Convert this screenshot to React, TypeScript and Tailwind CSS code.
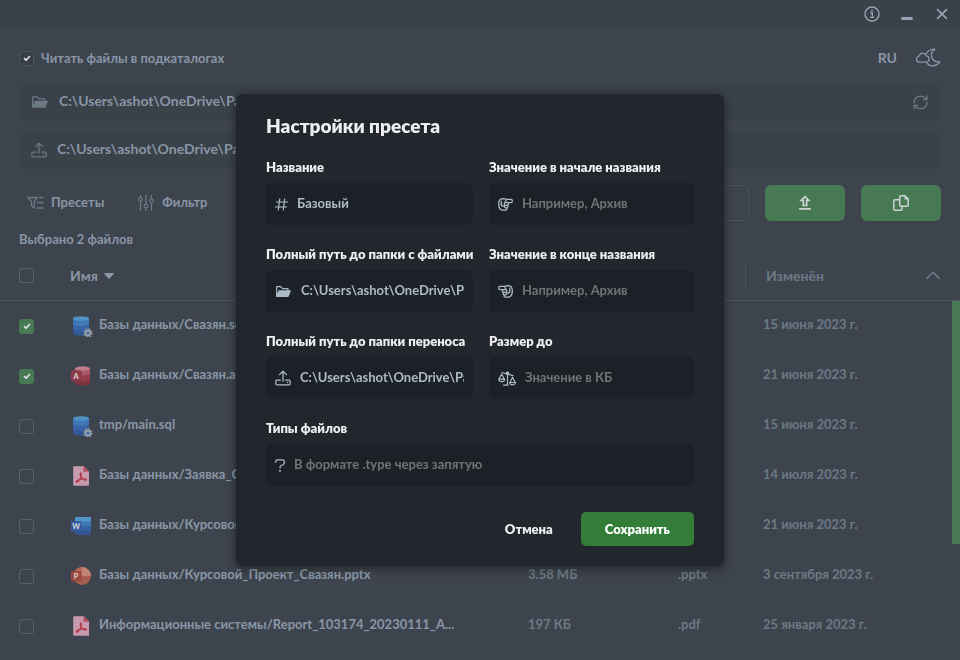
import { useState, type ReactNode } from "react";
import { AiFillFolderOpen } from "react-icons/ai";
import { CgClose } from "react-icons/cg";
import { MdOutlineUpload } from "react-icons/md";
import { VscChevronUp } from "react-icons/vsc";
import { RefreshCw } from "lucide-react";

const PATH = "C:\\Users\\ashot\\OneDrive\\Рабочий стол";

type Kind = "sql" | "access" | "pdf" | "word" | "ppt";

type FileRow = {
  kind: Kind;
  name: string;
  size: string;
  ext: string;
  date: string;
  selected: boolean;
};

const FILES: FileRow[] = [
  { kind: "sql", name: "Базы данных/Свазян.sql", size: "12 КБ", ext: ".sql", date: "15 июня 2023 г.", selected: true },
  { kind: "access", name: "Базы данных/Свазян.accdb", size: "1.2 МБ", ext: ".mdb", date: "21 июня 2023 г.", selected: true },
  { kind: "sql", name: "tmp/main.sql", size: "12 КБ", ext: ".sql", date: "15 июня 2023 г.", selected: false },
  { kind: "pdf", name: "Базы данных/Заявка_Свазян.pdf", size: "90 КБ", ext: ".pdf", date: "14 июля 2023 г.", selected: false },
  { kind: "word", name: "Базы данных/Курсовой_Проект.docx", size: "2 МБ", ext: ".docx", date: "21 июня 2023 г.", selected: false },
  { kind: "ppt", name: "Базы данных/Курсовой_Проект_Свазян.pptx", size: "3.58 МБ", ext: ".pptx", date: "3 сентября 2023 г.", selected: false },
  { kind: "pdf", name: "Информационные системы/Report_103174_20230111_A...", size: "197 КБ", ext: ".pdf", date: "25 января 2023 г.", selected: false },
];

function Check({ label, initial, green = false }: { label: string; initial: boolean; green?: boolean }) {
  const [on, setOn] = useState(initial);
  return (
    <span className="grid size-[15px] shrink-0 place-items-center">
      <input
        type="checkbox"
        aria-label={label}
        checked={on}
        onChange={(e) => setOn(e.target.checked)}
        className={
          "col-start-1 row-start-1 size-[15px] appearance-none rounded-[3px] border " +
          (green && on ? "border-[#477a53] bg-[#477a53]" : on ? "border-[#4b535d] bg-[#373d47]" : "border-[#58606b] bg-transparent")
        }
      />
      {on && (
        <svg viewBox="0 0 8 8" className="pointer-events-none col-start-1 row-start-1 size-2" fill="none" stroke="#d5d8dc" strokeWidth="1.8">
          <path d="M1 4.2 3.1 6.2 7 2" />
        </svg>
      )}
    </span>
  );
}

function InfoIcon() {
  return (
    <svg viewBox="0 0 16 16" className="size-4" fill="none" stroke="currentColor">
      <circle cx="8" cy="8" r="7" strokeWidth="1.4" />
      <path d="M6.2 7h2.1v4.3M6 11.4h4.2" strokeWidth="1.4" />
      <circle cx="8" cy="4.7" r="1" fill="currentColor" stroke="none" />
    </svg>
  );
}

function CloudMoonIcon() {
  return (
    <svg viewBox="0 0 26 20" className="h-5 w-[26px]" fill="none" stroke="currentColor" strokeWidth="1.3" strokeLinejoin="round" strokeLinecap="round">
      <path d="M4.200 14.200a3 3 0 0 1-.4-5.900 4 4 0 0 1 7.600-.4 3.200 3.200 0 0 1 .5 6.200l-.8.100z" />
      <path d="M11.200 5.600C12.800 2.900 15.800 1.200 20 1.200c-3 2-4.200 5.100-3.300 8.100 1 3.300 4.300 4.900 8.300 4.400-1.600 2.500-4.200 4.100-7.500 4.100-2.200 0-4-.8-5.300-2.300" />
    </svg>
  );
}

function PresetsIcon() {
  return (
    <svg viewBox="0 0 17 14" className="h-3.5 w-[17px]" fill="none" stroke="currentColor" strokeWidth="1.3">
      <path d="M1 1.500h9.500L7.200 6v6L4.600 10V6z" />
      <path d="M12.500 1.500h4M10 6.500h6.500M10 12h6.500" />
    </svg>
  );
}

function SlidersIcon() {
  return (
    <svg viewBox="0 0 16 16" className="size-4" fill="none" stroke="currentColor" strokeWidth="1.2">
      <path d="M2.500 0v2.500M2.500 6.500V16M8 0v9M8 13v3M13.500 0v4M13.500 8v8" />
      <circle cx="2.500" cy="4.500" r="1.800" />
      <circle cx="8" cy="11" r="1.800" />
      <circle cx="13.500" cy="6" r="1.800" />
    </svg>
  );
}

function CopyIcon() {
  return (
    <svg viewBox="0 0 16 16" className="size-4" fill="none" stroke="currentColor" strokeWidth="1.500" strokeLinejoin="round">
      <path d="M8 .8h4L15.200 4v6a1.300 1.300 0 0 1-1.300 1.300H8A1.300 1.300 0 0 1 6.700 10V2.100A1.300 1.300 0 0 1 8 .8z" />
      <path d="M11.800.8v3.400h3.400z" fill="currentColor" strokeWidth="0.500" />
      <path d="M6.700 4.700H2.100A1.300 1.300 0 0 0 .8 6v7.900a1.300 1.300 0 0 0 1.300 1.300h5.700A1.300 1.300 0 0 0 9.100 13.900v-2.600" />
    </svg>
  );
}

function HashIcon() {
  return (
    <svg viewBox="0 0 13 13" className="size-[13px] shrink-0" fill="none" stroke="currentColor" strokeWidth="1.2">
      <path d="M4.800.5 3.200 12.500M9.800.5 8.200 12.500M1 4h12M0 9h12" />
    </svg>
  );
}

function UploadIcon() {
  return (
    <svg viewBox="0 0 16 16" className="size-4 shrink-0" fill="none" stroke="currentColor" strokeWidth="1.3" strokeLinejoin="round" strokeLinecap="round">
      <path d="M8 11V1.200M4.500 4.600 8 1.200l3.500 3.400" />
      <path d="M5.300 10.200H2a1.200 1.200 0 0 0-1.200 1.200v2.200A1.200 1.200 0 0 0 2 14.800h12a1.200 1.200 0 0 0 1.200-1.200v-2.200a1.200 1.200 0 0 0-1.200-1.200h-3.300" />
      <circle cx="12.600" cy="12.500" r=".8" fill="currentColor" stroke="none" />
    </svg>
  );
}

function ScalesIcon() {
  return (
    <svg viewBox="0 0 18 15" className="h-[15px] w-[18px] shrink-0" fill="none" stroke="currentColor" strokeWidth="1.200" strokeLinejoin="round" strokeLinecap="round">
      <path d="M4 1.500 15 4.600M9.500 1v13M5.500 14.200h4.500" />
      <circle cx="9.500" cy="2.300" r="1.300" />
      <path d="M3.600 3 1 8.200h5.400zM.7 8.200c.2 1.600 1.500 2.400 3 2.400s2.800-.8 3-2.400" />
      <path d="M14.500 6.300 12 11.500h5.200zM11.600 11.500c.2 1.600 1.500 2.400 3 2.400s2.700-.8 2.900-2.400" />
    </svg>
  );
}

function HandIcon({ flipped = false }: { flipped?: boolean }) {
  return (
    <svg viewBox="0 0 15 13" className={"h-[13px] w-[15px] shrink-0 " + (flipped ? "-scale-x-100" : "")} fill="none" stroke="currentColor" strokeWidth="1.3" strokeLinejoin="round" strokeLinecap="round">
      <path d="M13 1.400H8.500C7.500.9 6 .7 4.500.7 2 .8.7 3 .7 6s1.400 6 4 6.200h3c1.200 0 1.600-1.400 1-2.300 1.200-.2 1.500-1.600.9-2.500 1-.3 1.200-1.500.6-2.800H13c1.800-.1 1.800-3.100 0-3.200z" />
      <path d="M10.300 4.600H6.800L8 2.600M6.800 4.600c-1.200 1.200-.2 2.700.6 2.700h2.200M6.800 7.300c-.9 1 0 2.500.8 2.500h1.200M3.300 3.200v3.300c0 1 .8 1.700 2.200 1.700" />
    </svg>
  );
}

function QuestionIcon() {
  return (
    <svg viewBox="0 0 10 13" className="h-[13px] w-2.5 shrink-0" fill="none" stroke="currentColor" strokeWidth="1.3">
      <path d="M.7 3.800V2.500C.7 1.400 1.400.8 2.400.8h5.200c1 0 1.700.6 1.700 1.700v1.300c0 .8-.3 1.300-1 1.700L5.900 6.700c-.6.400-.9.800-.9 1.500v1.300" />
      <path d="M5 11v1.800" strokeWidth="1.700" />
    </svg>
  );
}

function FileIcon({ kind }: { kind: Kind }) {
  const box = "size-[22px] shrink-0";
  if (kind === "sql") {
    return (
      <svg viewBox="0 0 22 22" className={box}>
        <path d="M2 3v15c0 1.500 3.500 2.700 8 2.700s8-1.200 8-2.700V3z" fill="#345795" />
        <path d="M2 3v11.500c2 1.200 5 1.600 8 1.600s6-.4 8-1.600V3z" fill="#3863a6" />
        <path d="M2 3v6.500c2 1.200 5 1.600 8 1.600s6-.4 8-1.600V3z" fill="#4078b5" />
        <ellipse cx="10" cy="3.500" rx="8" ry="2.300" fill="#4f93c4" />
        <circle cx="17" cy="18" r="3.900" fill="none" stroke="#87909b" strokeWidth="1.800" strokeDasharray="1.700 1.360" />
        <circle cx="17" cy="18" r="2.500" fill="#3a6ea8" stroke="#98a1ab" strokeWidth="1.800" />
      </svg>
    );
  }
  if (kind === "access") {
    return (
      <svg viewBox="0 0 22 22" className={box}>
        <path d="M4 3v15.300c0 1.400 3.400 2.400 7.500 2.400s7.500-1 7.500-2.400V3z" fill="#7d3340" />
        <path d="M4 3v12c2 1 4.500 1.400 7.500 1.400S17 16 19 15V3z" fill="#953f4e" />
        <path d="M4 3v6c2 1 4.500 1.400 7.500 1.400S17 10 19 9V3z" fill="#a85766" />
        <ellipse cx="11.500" cy="3.500" rx="7.500" ry="2.200" fill="#bd7c8b" />
        <rect x="0" y="5.500" width="10.500" height="10.500" rx="1" fill="#8d3a49" />
        <text x="5.200" y="13.500" textAnchor="middle" fontSize="7.500" fontWeight="700" fill="#dcd3d8">A</text>
      </svg>
    );
  }
  if (kind === "word") {
    return (
      <svg viewBox="0 0 22 22" className={box}>
        <rect x="4" y="2" width="16" height="18" rx="1" fill="#335591" />
        <path d="M4 3a1 1 0 0 1 1-1h14a1 1 0 0 1 1 1v12.500H4z" fill="#3863a3" />
        <path d="M4 3a1 1 0 0 1 1-1h14a1 1 0 0 1 1 1v8H4z" fill="#4078b4" />
        <path d="M4 3a1 1 0 0 1 1-1h14a1 1 0 0 1 1 1v3.500H4z" fill="#5095c6" />
        <rect x="0" y="6" width="10.500" height="10.500" rx="1" fill="#375c9d" />
        <text x="5.200" y="14" textAnchor="middle" fontSize="7.500" fontWeight="700" fill="#d3dae3">W</text>
      </svg>
    );
  }
  if (kind === "ppt") {
    return (
      <svg viewBox="0 0 22 22" className={box}>
        <circle cx="11" cy="11" r="9" fill="#a65d4d" />
        <path d="M11 2a9 9 0 0 1 9 9h-9z" fill="#c38373" />
        <path d="M11 2a9 9 0 0 0-9 9h9z" fill="#b3685a" />
        <rect x="0" y="6" width="10.500" height="10.500" rx="1" fill="#98493d" />
        <text x="5.200" y="14" textAnchor="middle" fontSize="7.500" fontWeight="700" fill="#e0d4d3">P</text>
      </svg>
    );
  }
  return (
    <svg viewBox="0 0 22 22" className={box}>
      <path d="M3 1.200h9.800L18 6.500v14.300H3a.8.800 0 0 1-.8-.8V2a.8.800 0 0 1 .8-.8z" fill="#c79aae" />
      <path d="M12.500 1.200 18 6.800h-5.500z" fill="#b64b5b" />
      <path d="M9.600 8c1.200 0 .9 2.200.3 3.900-.7 2-2 4.600-3.800 5.300-1.300.3-1-1.200.8-2 2.500-1.100 5.500-1.600 7.500-1.200 1.600.4.900 1.400-.4 1.100-2-.6-4.600-3.400-4.700-5.500 0-.9 0-1.600.3-1.600z" fill="none" stroke="#b33c50" strokeWidth="1.300" />
    </svg>
  );
}

function Field({ id, label, icon, value, placeholder }: { id: string; label: string; icon: ReactNode; value?: string; placeholder?: string }) {
  return (
    <div className="flex min-w-0 flex-col gap-1.5">
      <label htmlFor={id} className="text-[13px] leading-5 font-extrabold whitespace-nowrap text-[#eeeeee]">
        {label}
      </label>
      <div className="flex h-[42px] items-center gap-[9px] rounded-md bg-[#1c2128] px-[9px] text-[#adbac7]">
        {icon}
        <input
          id={id}
          type="text"
          defaultValue={value}
          placeholder={placeholder}
          className="min-w-0 flex-1 bg-transparent pb-0.5 text-[13px] leading-5 font-bold outline-none placeholder:text-[#717375]"
        />
      </div>
    </div>
  );
}

function PathBar({ icon, label, children }: { icon: ReactNode; label: string; children?: ReactNode }) {
  return (
    <div className="flex h-[38px] items-center gap-2.5 rounded-md bg-[#3a4149] px-3 text-[#6b7985]">
      {icon}
      <input type="text" aria-label={label} defaultValue={PATH} className="min-w-0 flex-1 bg-transparent pb-0.5 text-sm leading-5 font-bold text-[#8996a7] outline-none" />
      {children}
    </div>
  );
}

export default function App() {
  return (
    <div className="flex h-screen flex-col overflow-hidden bg-[#3e444d] font-['Lato','Noto_Sans',sans-serif] text-[13px] leading-5 font-bold text-[#8996a7]">
      <header className="flex h-7 shrink-0 items-center justify-end gap-5 bg-[#3b4149] pr-2.5 text-[#97a4b5]">
        <button type="button" aria-label="О программе">
          <InfoIcon />
        </button>
        <button type="button" aria-label="Свернуть" className="flex h-3 w-3.5 items-end justify-center">
          <span className="h-[3px] w-3 rounded-full bg-current" />
        </button>
        <button type="button" aria-label="Закрыть">
          <CgClose className="size-4" strokeWidth={0.8} stroke="currentColor" />
        </button>
      </header>

      <main className="flex min-h-0 flex-1 flex-col pt-5">
        <div className="flex flex-col px-[19px]">
          <div className="flex h-5 items-center">
            <label className="flex items-center gap-[7px]">
              <Check label="Читать файлы в подкаталогах" initial />
              Читать файлы в подкаталогах
            </label>
            <button type="button" className="mr-[18px] ml-auto text-sm">
              RU
            </button>
            <button type="button" aria-label="Тема">
              <CloudMoonIcon />
            </button>
          </div>

          <div className="mt-[15px] flex flex-col gap-2.5">
            <PathBar label="Папка с файлами" icon={<AiFillFolderOpen className="size-[18px] shrink-0" />}>
              <button type="button" aria-label="Обновить">
                <RefreshCw className="size-[17px]" strokeWidth={1.8} />
              </button>
            </PathBar>
            <PathBar label="Папка переноса" icon={<UploadIcon />} />
          </div>

          <div className="mt-4 flex h-9 items-center">
            <button type="button" className="flex items-center gap-[7px] pl-2">
              <span className="text-[#6b7985]">
                <PresetsIcon />
              </span>
              <span className="pb-0.5">Пресеты</span>
            </button>
            <button type="button" className="ml-[34px] flex items-center gap-2">
              <span className="text-[#6b7985]">
                <SlidersIcon />
              </span>
              <span className="pb-0.5">Фильтр</span>
            </button>
            <input type="search" aria-label="Поиск" className="ml-10 h-9 min-w-0 flex-1 rounded-md border border-[#4b525b] bg-transparent px-3 outline-none" />
            <button type="button" aria-label="Перенести" className="ml-4 grid h-9 w-20 place-items-center rounded-md bg-[#477a53] text-[#d0d3d6]">
              <MdOutlineUpload className="size-5" />
            </button>
            <button type="button" aria-label="Копировать" className="ml-4 grid h-9 w-20 place-items-center rounded-md bg-[#477a53] text-[#d0d3d6]">
              <CopyIcon />
            </button>
          </div>

          <p className="mt-2">Выбрано 2 файлов</p>
        </div>

        <div className="relative mt-0.5 min-h-0 flex-1 overflow-hidden">
          <table className="w-full table-fixed border-separate border-spacing-0 text-left">
            <colgroup>
              <col className="w-[70px]" />
              <col />
              <col className="w-[150px]" />
              <col className="w-[67px]" />
              <col className="w-[215px]" />
            </colgroup>
            <thead>
              <tr className="text-sm">
                <th className="h-[50px] border-b border-[#4d545e] pl-[19px]">
                  <Check label="Выбрать все" initial={false} />
                </th>
                <th className="border-b border-[#4d545e]">
                  <button type="button" className="flex items-center gap-1.5">
                    Имя
                    <svg viewBox="0 0 10 6" className="h-1.5 w-2.5" fill="currentColor">
                      <path d="M1 0h8c.8 0 1 .7.500 1.200L5.600 5.600c-.4.400-.8.400-1.200 0L.5 1.200C0 .7.200 0 1 0z" />
                    </svg>
                  </button>
                </th>
                <th className="border-b border-[#4d545e] text-[#6b7985]">Размер</th>
                <th className="border-b border-[#4d545e] text-[#6b7985]">Тип</th>
                <th className="border-b border-[#4d545e] text-[#6b7985]">
                  <button type="button" className="flex h-6 w-full items-center justify-between border-l border-[#4d545e] pr-4 pl-5">
                    Изменён
                    <VscChevronUp className="size-[22px]" stroke="currentColor" strokeWidth={0.5} />
                  </button>
                </th>
              </tr>
            </thead>
            <tbody>
              {FILES.map((file, i) => (
                <tr key={i}>
                  <td className="h-[50px] pl-[19px]">
                    <Check label={file.name} initial={file.selected} green />
                  </td>
                  <td>
                    <div className="flex items-center gap-1.5 pl-px whitespace-nowrap">
                      <FileIcon kind={file.kind} />
                      <span className="pb-1">{file.name}</span>
                    </div>
                  </td>
                  <td className="pb-1 text-[#6b7985]">{file.size}</td>
                  <td className="pb-1 text-[#6b7985]">{file.ext}</td>
                  <td className="pb-1 pl-[18px] text-[#6b7985]">{file.date}</td>
                </tr>
              ))}
            </tbody>
          </table>
          <div className="absolute top-[50px] right-0 h-[243px] w-2 bg-[#477a53]" />
        </div>
      </main>

      <div className="fixed inset-0 flex items-center justify-center">
        <form
          role="dialog"
          aria-labelledby="preset-title"
          onSubmit={(e) => e.preventDefault()}
          className="flex w-[488px] flex-col gap-[19px] rounded-md bg-[#22272e] px-[30px] py-5 shadow-[0_2px_10px_rgba(0,0,0,0.5)]"
        >
          <h2 id="preset-title" className="text-[19px] leading-6 font-extrabold text-[#eeeeee]">
            Настройки пресета
          </h2>
          <div className="grid grid-cols-[207fr_205fr] gap-x-4 gap-y-[19px]">
            <Field id="name" label="Название" icon={<HashIcon />} value="Базовый" />
            <Field id="prefix" label="Значение в начале названия" icon={<HandIcon />} placeholder="Например, Архив" />
            <Field id="source" label="Полный путь до папки с файлами" icon={<AiFillFolderOpen className="size-[17px] shrink-0" />} value={PATH} />
            <Field id="suffix" label="Значение в конце названия" icon={<HandIcon flipped />} placeholder="Например, Архив" />
            <Field id="target" label="Полный путь до папки переноса" icon={<UploadIcon />} value={PATH} />
            <Field id="size" label="Размер до" icon={<ScalesIcon />} placeholder="Значение в КБ" />
            <div className="col-span-2">
              <Field id="types" label="Типы файлов" icon={<QuestionIcon />} placeholder="В формате .type через запятую" />
            </div>
          </div>
          <div className="mt-[7px] flex items-center justify-end gap-7 font-extrabold">
            <button type="button" className="text-[#eeeeee]">
              Отмена
            </button>
            <button type="submit" className="h-[34px] rounded-[5px] bg-[#347d39] px-6 text-white">
              Сохранить
            </button>
          </div>
        </form>
      </div>
    </div>
  );
}
